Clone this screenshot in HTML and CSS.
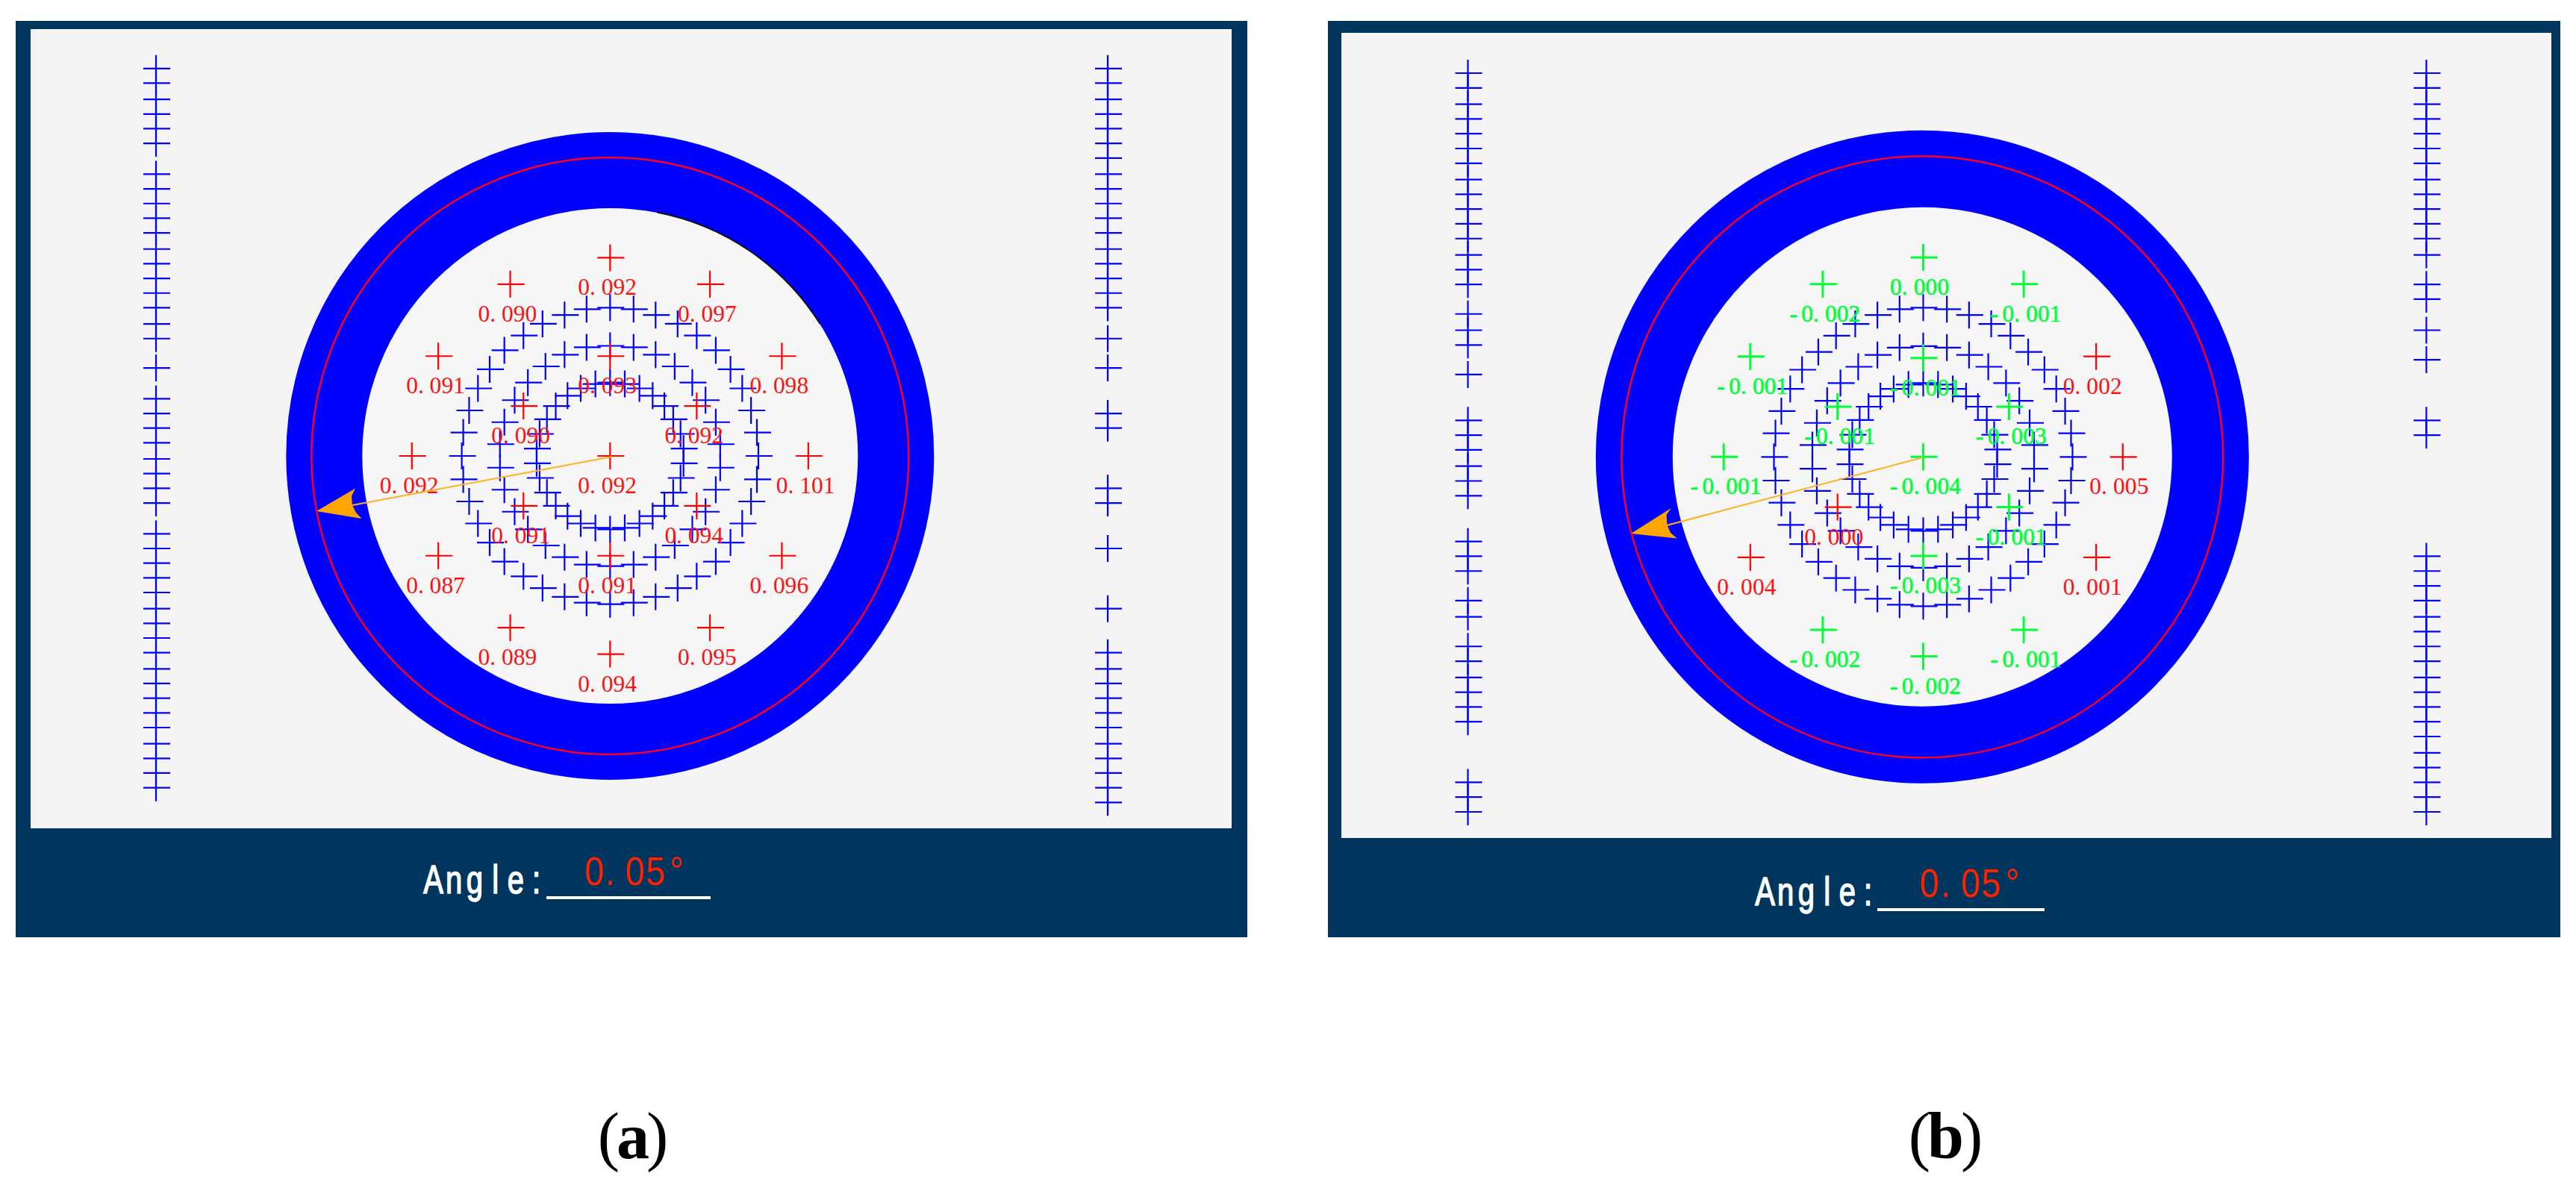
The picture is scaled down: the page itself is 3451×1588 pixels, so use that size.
FILE: index.html
```html
<!DOCTYPE html>
<html lang="en">
<head>
    <meta charset="UTF-8">
    <meta name="viewport" content="width=device-width, initial-scale=1.0">
    <title>Angle measurement</title>
    <link rel="stylesheet" href="styles.css">
</head>
<body>
    <div class="panels">
        <figure class="figure">
            <div class="panel panel-a">
                <svg class="plot" id="plotA" viewBox="41 39 1609 1071"></svg>
                <svg class="readout" viewBox="41 1110 1609 146">
                    <text class="label" transform="translate(580.5 1196.5) scale(0.74 1)" x="0 37.4 74.9 112.4 149.2 186.5">Angle:</text>
                    <text class="value" transform="translate(796.3 1186) scale(0.86 1)" x="0 24.5 63.6 95.4 128.4">0.05°</text>
                    <line class="underline" x1="732" y1="1203" x2="952" y2="1203" />
                </svg>
            </div>
            <figcaption>(<b>a</b>)</figcaption>
        </figure>
        <figure class="figure">
            <div class="panel panel-b">
                <svg class="plot" id="plotB" viewBox="1797 44 1621 1079"></svg>
                <svg class="readout" viewBox="1797 1123 1621 133">
                    <text class="label" transform="translate(2364.5 1212.5) scale(0.74 1)" x="0 37.4 74.9 112.4 149.2 186.5">Angle:</text>
                    <text class="value" transform="translate(2585 1202) scale(0.86 1)" x="0 25.2 64.3 96.2 129.4">0.05°</text>
                    <line class="underline" x1="2515" y1="1219" x2="2739" y2="1219" />
                </svg>
            </div>
            <figcaption>(<b>b</b>)</figcaption>
        </figure>
    </div>

    <script src="script.js"></script>
</body>
</html>
```
FILE: styles.css
```css
body {
    margin: 0;
    background: white;
    font-family: 'Liberation Serif', 'Times New Roman', serif;
}
.panels {
    display: flex;
    gap: 108px;
    padding: 28px 21px 0;
}
.figure {
    margin: 0;
}
.panel {
    box-sizing: border-box;
    height: 1228px;
    background: #00365d;
}
.panel-a {
    width: 1650px;
    padding: 11px 21px 0 20px;
}
.panel-b {
    width: 1651px;
    padding: 16px 12px 0 18px;
}
svg {
    display: block;
    width: 100%;
}
.plot {
    background: #f4f4f4;
}
figcaption {
    margin-top: 217px;
    font-size: 88px;
    line-height: 100px;
    letter-spacing: -4px;
    text-align: center;
    color: black;
}

/* ring */
.ring {
    fill: #f6f6f6;
    stroke: #0000ff;
}
.ring-line {
    fill: none;
    stroke: #ff0018;
    stroke-width: 2.4;
}
.ring-edge {
    fill: none;
    stroke: #111;
    stroke-width: 2;
}

/* crosses and their values */
.cross {
    fill: none;
    stroke-width: 2.2;
}
.blue {
    stroke: #0000ff;
}
.red {
    stroke: #ff0000;
}
.green {
    stroke: #00ff38;
    stroke-width: 3;
}
.num {
    font-size: 31.5px;
}
.num-red {
    fill: #ff1010;
}
.num-green {
    fill: #00ff38;
    stroke: #00ff38;
    stroke-width: 0.6;
}
.arrow {
    fill: #ffa500;
}
.arrow-line {
    stroke: #ffb020;
    stroke-width: 2;
}

/* bottom bar */
.readout text {
    font-family: 'Liberation Sans', Arial, sans-serif;
    font-size: 54px;
    text-anchor: middle;
}
.label {
    fill: white;
    stroke: white;
    stroke-width: 1.6;
}
.value {
    fill: #ff2000;
}
.underline {
    stroke: white;
    stroke-width: 4;
}
```
FILE: script.js
```js
// n: how many rows of the side column, skip: rows without a cross
const plots = [
    {
        id: "plotA", cx: 817.3, cy: 611, px: 1.967, top: 91.8, textDx: -43,
        ringX: 817.3, ring: [434, 332], line: 400,
        columns: [
            { x: 209, n: 49, skip: [6, 19, 21, 30] },
            { x: 1484, n: 50, skip: [17, 19, 21, 22, 25, 26, 27, 30, 31, 33, 34, 35, 37, 38] }
        ],
        circles: [[199, 40], [148, 30], [98.5, 30]],
        center: "0.092",
        inner: ["0.093", "0.092", "0.094", "0.091", "0.091", "0.090"],
        outer: ["0.092", "0.097", "0.098", "0.101", "0.096", "0.095", "0.094", "0.089", "0.087", "0.092", "0.091", "0.090"],
        radii: [133, 266],
        red: "all",
        arrow: "424,685 476,654.6 471,665 472,677 477,687 484.5,695",
        shaft: [472, 677, 820, 612],
        edge: true
    },
    {
        id: "plotB", cx: 2576.5, cy: 612.3, px: 1.98, top: 98, textDx: -44.5,
        ringX: 2575.3, ring: [437.5, 334.5], line: 403,
        columns: [
            { x: 1966.5, n: 50, skip: [15, 19, 21, 22, 29, 30, 34, 37, 44, 45, 46] },
            { x: 3250.5, n: 50, skip: [13, 16, 18, 20, 21, 22, 25, 26, 27, 28, 29, 30, 31] }
        ],
        circles: [[200, 40], [149, 30], [99.2, 30]],
        center: "-0.004",
        inner: ["-0.001", "-0.003", "-0.001", "-0.003", "0.000", "-0.001"],
        outer: ["0.000", "-0.001", "0.002", "0.005", "0.001", "-0.001", "-0.002", "-0.002", "0.004", "-0.001", "-0.001", "-0.002"],
        radii: [133.5, 267.6],
        red: ["inner4", "outer2", "outer3", "outer4", "outer8"],
        arrow: "2185,715 2238.7,681 2232.5,690 2233.5,704 2238,714 2246.7,721.6",
        shaft: [2233, 704, 2576, 613]
    }
];

function cross(x, y, color) {
    return `<path class="cross ${color}" d="M${x - 17} ${y}h36M${x} ${y - 18}v36" />`;
}

// Point on a circle, clockwise from the top, snapped to the camera pixel
function point(p, r, i, n) {
    const a = 2 * Math.PI * i / n;
    return [
        p.cx + Math.round(r * Math.sin(a) / p.px) * p.px,
        p.cy - Math.round(r * Math.cos(a) / p.px) * p.px
    ];
}

function mark(p, x, y, text, key) {
    const color = p.red === "all" || p.red.includes(key) ? "red" : "green";
    // every character sits in a cell of 8 camera pixels
    const xs = [...text].map((c, i) => (x + p.textDx + i * 8 * p.px).toFixed(1)).join(" ");
    return cross(x, y, color) + `<text class="num num-${color}" x="${xs}" y="${y + 50}">${text}</text>`;
}

function draw(p) {
    const [ro, ri] = p.ring;
    let out = `<circle class="ring" cx="${p.ringX}" cy="${p.cy}" r="${(ro + ri) / 2}" stroke-width="${ro - ri}" />`;
    out += `<circle class="ring-line" cx="${p.ringX}" cy="${p.cy}" r="${p.line}" />`;
    if (p.edge) {
        const a = point(p, ri, 3, 100), b = point(p, ri, 16, 100);
        out += `<path class="ring-edge" d="M${a}A${ri} ${ri} 0 0 1 ${b}" />`;
    }

    for (const col of p.columns) {
        for (let i = 0; i < col.n; i++) {
            if (col.skip.includes(i)) continue;
            out += cross(col.x, p.top + Math.floor(i * 10.21 + 0.6) * p.px, "blue");
        }
    }
    for (const [r, n] of p.circles) {
        for (let i = 0; i < n; i++) {
            out += cross(...point(p, r, i, n), "blue");
        }
    }

    out += mark(p, p.cx, p.cy, p.center, "center");
    p.inner.forEach((t, i) => out += mark(p, ...point(p, p.radii[0], i, 6), t, "inner" + i));
    p.outer.forEach((t, i) => out += mark(p, ...point(p, p.radii[1], i, 12), t, "outer" + i));

    const [x1, y1, x2, y2] = p.shaft;
    out += `<line class="arrow-line" x1="${x1}" y1="${y1}" x2="${x2}" y2="${y2}" />`;
    out += `<polygon class="arrow" points="${p.arrow}" />`;
    document.getElementById(p.id).innerHTML = out;
}

plots.forEach(draw);
```
